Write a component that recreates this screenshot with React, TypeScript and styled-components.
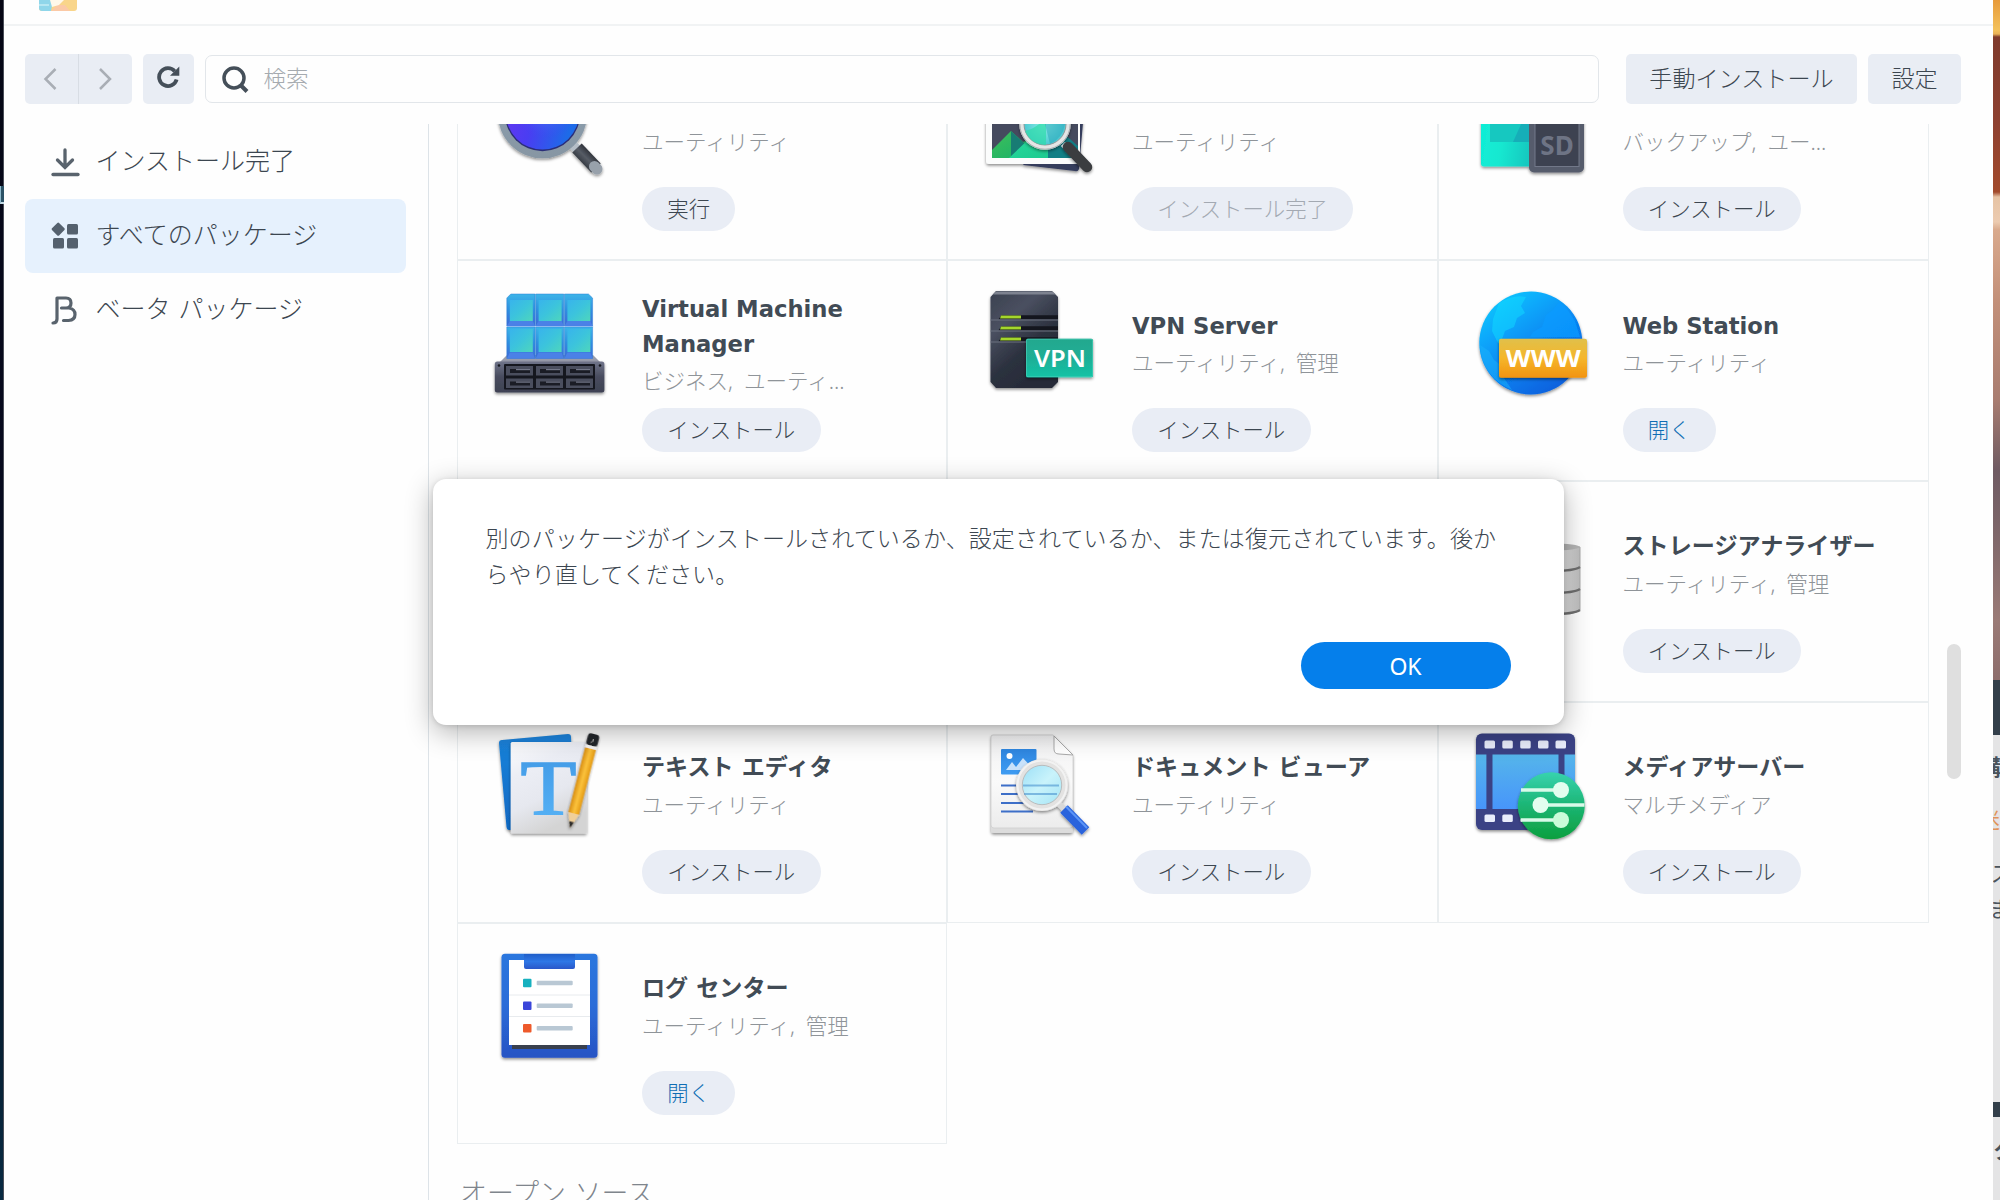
import React from "react";
import styled, { createGlobalStyle } from "styled-components";

const GlobalStyle = createGlobalStyle`
  * { box-sizing: border-box; }
  html, body { margin: 0; padding: 0; }
  body {
    width: 2000px;
    height: 1200px;
    overflow: hidden;
    background: #fefefe;
    font-family: "Noto Sans", "Noto Sans CJK JP", sans-serif;
    font-weight: 300;
    color: #3c4650;
  }
  button { font: inherit; color: inherit; border: 0; padding: 0; margin: 0; }
`;

const Desktop = styled.div`
  position: relative;
  display: flex;
  width: 2000px;
  height: 1200px;
  overflow: hidden;
`;

const LeftEdge = styled.div`
  flex: none;
  width: 4px;
  padding-top: 186px;
  background: linear-gradient(#050614 0, #070a1e 40%, #06233a 66%, #061a2c 80%, #082a42 100%);
  border-right: 1px solid #4a4e58;
`;

const LeftMark = styled.div`
  width: 4px;
  height: 18px;
  border-left: 1px solid #8fb9cc;
  border-bottom: 2px solid #c5dbe6;
  background: #2b5266;
`;

const RightEdge = styled.div`
  flex: none;
  width: 7px;
  display: flex;
  flex-direction: column;
  overflow: hidden;
`;

const Wallpaper = styled.div`
  flex: none;
  height: 680px;
  background: linear-gradient(
    #e79a3a 0, #f3c15b 30px, #e9b257 34px, #7e3a2c 37px, #8d4030 120px, #a24a2c 192px,
    #e6c3a4 197px, #eccbb0 222px, #d9a98c 230px, #c39079 300px, #a87c70 400px,
    #6f5b63 470px, #7a6468 520px, #9a7a76 620px, #8d6d6c 680px
  );
`;

const SideBar = styled.div<{ $h: number }>`
  flex: none;
  height: ${(p) => p.$h}px;
  background: #333f4a;
`;

const SidePanel = styled.div<{ $h: number; $pad?: number }>`
  flex: none;
  height: ${(p) => p.$h}px;
  padding-top: ${(p) => p.$pad ?? 0}px;
  background: #e4e4e5;
  overflow: hidden;
`;

const SideText = styled.div<{ $bold?: boolean; $color?: string; $shift: number; $h?: number }>`
  height: ${(p) => p.$h ?? 36}px;
  line-height: ${(p) => p.$h ?? 36}px;
  font-size: 22px;
  white-space: nowrap;
  font-weight: ${(p) => (p.$bold ? 700 : 400)};
  color: ${(p) => p.$color ?? "#4a535c"};
  text-indent: ${(p) => p.$shift}px;
`;

const Window = styled.main`
  flex: 1;
  min-width: 0;
  display: flex;
  flex-direction: column;
  background: #fefefe;
`;

const TitleBar = styled.header`
  flex: none;
  height: 26px;
  padding-left: 34.5px;
  border-bottom: 2px solid #f1f3f4;
`;

const Toolbar = styled.div`
  flex: none;
  display: flex;
  align-items: flex-start;
  height: 98px;
  padding: 28px 32px 0 20.5px;
`;

const NavGroup = styled.div`
  display: flex;
  width: 107px;
  height: 50px;
  margin-right: 11px;
  border-radius: 5px;
  background: #e9edf4;
  overflow: hidden;
`;

const NavButton = styled.button`
  flex: 1;
  display: flex;
  align-items: center;
  justify-content: center;
  background: transparent;
  & + & { border-left: 1px solid #d8dde4; }
`;

const ToolButton = styled.button<{ $w: number }>`
  flex: none;
  display: flex;
  align-items: center;
  justify-content: center;
  width: ${(p) => p.$w}px;
  height: 50px;
  border-radius: 5px;
  background: #e9edf4;
  font-size: 23.1px;
  padding-bottom: 4px;
  white-space: nowrap;
`;

const SearchBox = styled.div`
  flex: 1;
  display: flex;
  align-items: center;
  gap: 15px;
  height: 48px;
  margin: 1px 27px 0 11px;
  padding-left: 15px;
  border: 1px solid #e2e6ea;
  border-radius: 7px;
  font-size: 22.6px;
  color: #a5aaaf;
`;

const Placeholder = styled.span`
  padding-bottom: 4px;
`;

const ActionGroup = styled.div`
  display: flex;
  gap: 11px;
`;

const Body = styled.div`
  flex: 1;
  min-height: 0;
  display: flex;
`;

const Sidebar = styled.nav`
  flex: none;
  width: 425px;
  padding: 1px 22px 0 21px;
  border-right: 1px solid #dde3e8;
`;

const SideItem = styled.div<{ $active?: boolean }>`
  display: flex;
  align-items: center;
  height: 74px;
  padding: 0 0 6px 25px;
  gap: 15.5px;
  border-radius: 8px;
  background: ${(p) => (p.$active ? "#e6f1fd" : "transparent")};
  font-family: "DejaVu Sans", "Noto Sans CJK JP", sans-serif;
  font-size: 25px;
  white-space: nowrap;
  svg { flex: none; margin-top: 6px; }
`;

const Content = styled.section`
  flex: 1;
  min-width: 0;
  padding-left: 28px;
  overflow: hidden;
`;

const PackageGrid = styled.div`
  display: grid;
  grid-template-columns: 490px 490.5px 491px;
  grid-auto-rows: 221px;
  margin-top: -85px;
`;

const Card = styled.article`
  display: flex;
  gap: 37px;
  padding: 26px 0 0 35px;
  border: 1px solid #eaeef0;
`;

const IconFrame = styled.div`
  flex: none;
  width: 112px;
  height: 112px;
  svg { display: block; overflow: visible; }
`;

const Info = styled.div`
  display: flex;
  flex-direction: column;
  align-items: flex-start;
`;

const Heading = styled.div`
  display: flex;
  flex-direction: column;
  justify-content: center;
  height: 114px;
  margin-bottom: 6.5px;
`;

const Name = styled.h3<{ $latin: boolean }>`
  margin: ${(p) => (p.$latin ? "2px 0 -2px" : "1px 0 -1px")};
  font-family: "DejaVu Sans", "Noto Sans CJK JP", sans-serif;
  font-size: ${(p) => (p.$latin ? 22.7 : 23.1)}px;
  font-weight: 700;
  line-height: 35px;
  min-height: 35px;
  white-space: pre-line;
  color: #414b55;
`;

const Category = styled.div`
  margin-top: 2px;
  font-size: 21.5px;
  line-height: 37px;
  word-spacing: 5.5px;
  white-space: pre;
  color: #8f9499;
`;

const Pill = styled.button<{ $tone: Tone }>`
  height: 44px;
  padding: 0 25.3px 3px;
  border-radius: 22px;
  background: #e9edf5;
  font-size: 21.4px;
  white-space: nowrap;
  color: ${(p) => (p.$tone === "link" ? "#0f6db4" : p.$tone === "muted" ? "#a3a9b2" : "#3c4650")};
`;

const SectionTitle = styled.h2`
  margin: 26.5px 0 0 3px;
  font-family: "DejaVu Sans", "Noto Sans CJK JP", sans-serif;
  font-size: 26.9px;
  font-weight: 300;
  line-height: 46px;
  color: #7f858c;
`;

const ScrollTrack = styled.div`
  flex: none;
  width: 46px;
  padding-top: 520px;
`;

const ScrollThumb = styled.div`
  width: 14px;
  height: 135px;
  border-radius: 7px;
  background: #dfdfdf;
`;

const Dialog = styled.div`
  position: absolute;
  left: 432.5px;
  top: 479px;
  width: 1131px;
  height: 246px;
  padding: 41px 53px 36px;
  display: flex;
  flex-direction: column;
  justify-content: space-between;
  align-items: flex-end;
  border-radius: 13px;
  background: #fff;
  box-shadow: 0 7px 28px rgba(0, 0, 0, 0.3), 0 1px 5px rgba(0, 0, 0, 0.12);
`;

const Message = styled.p`
  align-self: stretch;
  margin: 0;
  font-size: 23px;
  letter-spacing: 0.11px;
  line-height: 36px;
  white-space: pre;
`;

const OkButton = styled.button`
  width: 210px;
  height: 47px;
  border-radius: 24px;
  background: #057feb;
  color: #fff;
  font-size: 23px;
  font-weight: 400;
`;

type Tone = "normal" | "muted" | "link";

interface Pkg {
  icon?: React.ReactNode;
  name?: string;
  category?: string;
  action?: string;
  tone?: Tone;
}

const Icon = ({ children }: { children: React.ReactNode }) => (
  <svg width="112" height="112" viewBox="0 0 112 112">{children}</svg>
);

const Shadow = ({ id }: { id: string }) => (
  <filter id={id} x="-20%" y="-20%" width="140%" height="150%">
    <feDropShadow dx="0" dy="1.6" stdDeviation="1.4" floodColor="#000" floodOpacity="0.45" />
  </filter>
);

const Grad = ({ id, stops, x2 = 0, y2 = 1 }: { id: string; stops: string[]; x2?: number; y2?: number }) => (
  <linearGradient id={id} x1="0" y1="0" x2={x2} y2={y2}>
    {stops.map((c, i) => (
      <stop key={i} offset={i / (stops.length - 1)} stopColor={c} />
    ))}
  </linearGradient>
);

const UniversalSearchIcon = () => (
  <Icon>
    <defs>
      <Shadow id="us-s" />
      <Grad id="us-g" x2={1} y2={0.3} stops={["#6a35f0", "#4a3df2", "#1d6be8"]} />
      <radialGradient id="us-l" cx="0.55" cy="0.35" r="0.5">
        <stop offset="0" stopColor="#58b4ff" stopOpacity="0.9" />
        <stop offset="1" stopColor="#3b46f0" stopOpacity="0" />
      </radialGradient>
      <Grad id="us-r" stops={["#c3ced6", "#8a9cab", "#8796a3"]} />
      <linearGradient id="us-h" gradientUnits="userSpaceOnUse" x1="86" y1="99" x2="98" y2="87">
        <stop offset="0" stopColor="#272b31" />
        <stop offset="0.6" stopColor="#565c66" />
        <stop offset="1" stopColor="#30343b" />
      </linearGradient>
    </defs>
    <g filter="url(#us-s)">
      <path d="M79 78l8 8" stroke="#b5bec7" strokeWidth="9" />
      <path d="M84 82l19 20" stroke="url(#us-h)" strokeWidth="13" />
      <path d="M101.500 100.500l2.500 2.500" stroke="#98a1ab" strokeWidth="11" strokeLinecap="round" />
      <circle cx="49.500" cy="47.600" r="44.700" fill="url(#us-r)" />
    </g>
    <circle cx="49.500" cy="47.600" r="37.600" fill="#2a2d78" />
    <circle cx="49.500" cy="47" r="36.600" fill="url(#us-g)" />
    <circle cx="49.500" cy="47" r="36.600" fill="url(#us-l)" />
  </Icon>
);

const ImageViewerIcon = () => (
  <Icon>
    <defs>
      <Shadow id="iv-s" />
      <Grad id="iv-a" x2={1} stops={["#3fbf5a", "#16b06a"]} />
      <Grad id="iv-b" x2={1} stops={["#2be0a0", "#19c48c"]} />
      <radialGradient id="iv-l">
        <stop offset="0" stopColor="#8ff0e6" />
        <stop offset="1" stopColor="#4cc9d2" />
      </radialGradient>
    </defs>
    <g filter="url(#iv-s)">
      <path d="M98 20l5 2-7 81q-1 3-4 2L40 99z" fill="#343c5c" />
      <rect x="3" y="10" width="94" height="88" rx="3" fill="#fbfcfc" />
    </g>
    <path d="M9 16h86v76H9z" fill="#454a5e" />
    <path d="M9 84l19-19 12 11 14-6v22H9z" fill="url(#iv-a)" />
    <path d="M28 65v27h20l-6-14z" fill="#187c74" />
    <path d="M26 92l40-38 26 38z" fill="url(#iv-b)" />
    <path d="M65 54l30 26v12H65z" fill="#117f86" />
    <g filter="url(#iv-s)">
      <path d="M80 78l5 5" stroke="#c8ccd0" strokeWidth="6" />
      <path d="M85 81l19 20" stroke="#3a3c40" strokeWidth="10.500" strokeLinecap="round" />
      <circle cx="62" cy="58" r="25.700" fill="#e4e5e5" />
    </g>
    <circle cx="62" cy="58" r="25.200" fill="none" stroke="#a9aeb0" strokeWidth="1" />
    <circle cx="62" cy="58" r="21" fill="url(#iv-l)" stroke="#8e9799" strokeWidth="1" />
    <path d="M42 65q10-2 21-13v27q-15 0-21-14z" fill="#2fdcaa" opacity="0.7" />
    <path d="M62 58h20q-2 14-15 20z" fill="#229db5" opacity="0.45" />
  </Icon>
);

const UsbCopyIcon = () => (
  <Icon>
    <defs>
      <Shadow id="uc-s" />
      <Grad id="uc-a" x2={1} y2={0.2} stops={["#0cefd8", "#19e8d0", "#18c9c0"]} />
    </defs>
    <g filter="url(#uc-s)">
      <rect x="7" y="20" width="54" height="80.500" rx="3" fill="url(#uc-a)" />
      <path d="M16 56h39v20H16z" fill="#18c8c0" />
      <path d="M48 56h7v20H39z" fill="#14aeb8" />
      <rect x="55" y="48" width="55" height="58.500" rx="5" fill="#565b6c" />
    </g>
    <rect x="61" y="52" width="44" height="48.500" fill="#3d4251" stroke="#727889" strokeWidth="1" />
    <text x="83" y="89" textAnchor="middle" fontFamily="Noto Sans, sans-serif" fontWeight="700" fontSize="26" fill="#6e7485">SD</text>
  </Icon>
);

const VmmIcon = () => (
  <Icon>
    <defs>
      <Shadow id="vm-s" />
      <Grad id="vm-c" stops={["#3cb4e8", "#2f8fe0", "#3f68d8"]} />
      <Grad id="vm-i" x2={1} stops={["#38b4ec", "#3cc4dc", "#4ed6bc"]} />
      <Grad id="vm-t" stops={["#70748a", "#484c5e", "#3e4253"]} />
    </defs>
    <path d="M14 68h86l9 9H5z" fill="#9a9dac" />
    {[0, 1].map((r) =>
      [0, 1, 2].map((c) => (
        <g key={`${r}${c}`} transform={`translate(${13.8 + c * 28.8} ${7 + r * 33})`}>
          <path
            d={r ? "M0 0h28.200v31.500H0z" : c === 0 ? "M4 0h24.200v32H0V4z" : c === 2 ? "M0 0h24l4.200 4v28H0z" : "M0 0h28.200v32H0z"}
            fill="url(#vm-c)"
            stroke="#2f7fd4"
            strokeWidth="0.500"
          />
          <path d={r ? "M3 2h23v23H3z" : "M3 6h23v21H3z"} fill="url(#vm-i)" />
          <path d={r ? "M0 31.500l3-6h23l2.200 6z" : "M0 32l3-5h23l2.200 5z"} fill="#4f86ea" opacity="0.800" />
          {r === 0 && <path d="M0 32.600h28.800" stroke="#a9ccf8" strokeWidth="1" />}
        </g>
      )),
    )}
    <rect x="1.800" y="74.500" width="109.600" height="31" rx="2.500" fill="url(#vm-t)" filter="url(#vm-s)" />
    <rect x="11" y="77" width="91" height="25.500" rx="1" fill="#15171f" />
    {[0, 1].map((r) =>
      [0, 1, 2].map((c) => (
        <g key={`t${r}${c}`} transform={`translate(${13 + c * 30} ${79 + r * 12.5})`}>
          <rect width="27" height="9.500" fill="#4a4e5e" />
          <rect x="4" y="3" width="20" height="4" fill="#1a1c25" />
          <rect x="10" y="3" width="14" height="1.200" fill="#747889" />
        </g>
      )),
    )}
    <circle cx="6" cy="78.500" r="1.300" fill="#16181f" />
    <circle cx="107" cy="78.500" r="1.300" fill="#16181f" />
  </Icon>
);

const VpnIcon = () => (
  <Icon>
    <defs>
      <Shadow id="vp-s" />
      <Grad id="vp-b" x2={0.6} stops={["#3b4150", "#4a5060", "#2c313f", "#262a37"]} />
      <Grad id="vp-g" stops={["#23a88e", "#1fae96", "#12c3a6"]} />
    </defs>
    <path d="M13 4h56l6 6v85l-6 6H13l-5.500-6V10z" fill="url(#vp-b)" filter="url(#vp-s)" />
    <path d="M13 4.500h56l4 3H10z" fill="#7e8390" />
    {[30, 41, 52].map((y) => (
      <g key={y}>
        <path d={`M7.500 ${y + 2.2}h8l3-4H75v4z`} fill="#14161e" />
        <path d={`M7.500 ${y + 3}H75`} stroke="#6d7280" strokeWidth="1.200" />
        <path d={`M18 ${y - 1.5}h20v3H17z`} fill="#a4d62c" />
      </g>
    ))}
    <rect x="43" y="51.700" width="67" height="38.500" rx="1.500" fill="url(#vp-g)" filter="url(#vp-s)" />
    <rect x="43.500" y="52.200" width="66" height="37.500" rx="1.500" fill="none" stroke="#4bd3bd" strokeWidth="1" opacity="0.600" />
    <text x="77" y="79.500" textAnchor="middle" fontFamily="Noto Sans, sans-serif" fontWeight="600" fontSize="24" textLength="52" lengthAdjust="spacingAndGlyphs" fill="#fff">VPN</text>
  </Icon>
);

const WebIcon = () => (
  <Icon>
    <defs>
      <Shadow id="wb-s" />
      <Grad id="wb-b" x2={0.7} stops={["#16d4fd", "#0aa8fb", "#067ff0", "#0a60dd"]} />
      <Grad id="wb-y" stops={["#e0c04a", "#f5b62c", "#f2930f"]} />
    </defs>
    <circle cx="56.800" cy="56" r="51.500" fill="url(#wb-b)" filter="url(#wb-s)" />
    <path d="M25 16q14-9 27-6l-5 9 4 7-8 5-3 9-9 4-3 8 6 8-10-4-6-12 1-12z" fill="#12dcff" opacity="0.500" />
    <path d="M85 15l8 7 8 12 5 16H56l3-5 9-5 4-12 7-5z" fill="#0b9bff" opacity="0.750" />
    <path d="M6 58l9 6 5 9 8 6 2 12 8 12Q8 90 6 58z" fill="#1bb4fb" opacity="0.500" />
    <rect x="25" y="51.700" width="88" height="39" rx="2" fill="url(#wb-y)" filter="url(#wb-s)" />
    <text x="69.300" y="79.500" textAnchor="middle" fontFamily="Noto Sans, sans-serif" fontWeight="700" fontSize="24" textLength="75" lengthAdjust="spacingAndGlyphs" fill="#fff">WWW</text>
  </Icon>
);

const StorageIcon = () => (
  <Icon>
    <defs>
      <Grad id="st-b" x2={1} y2={0} stops={["#d9d9d9", "#c9c9c9", "#e6e6e6", "#bdbdbd"]} />
    </defs>
    <path d="M50 39v63q6 5 28 5t28-5V39z" fill="url(#st-b)" stroke="#a9a9a9" strokeWidth="1" />
    <ellipse cx="78" cy="39" rx="28" ry="3.500" fill="#b4b4b4" />
    {[59, 81, 102].map((y) => (
      <path key={y} d={`M50 ${y}q6 4 28 4t28-4`} fill="none" stroke="#6f6f6f" strokeWidth="2.500" />
    ))}
  </Icon>
);

const TextEditorIcon = () => (
  <Icon>
    <defs>
      <Shadow id="te-s" />
      <Grad id="te-b" stops={["#1b84dc", "#1068c2"]} />
      <Grad id="te-p" stops={["#fdfdfe", "#eceef5", "#e6e8ef", "#d4d4d4"]} x2={0.4} />
      <Grad id="te-t" stops={["#3f97e4", "#58b4f7"]} />
      <Grad id="te-y" x2={1} y2={0} stops={["#d98f12", "#fbc23c", "#e49a14"]} />
    </defs>
    <path d="M9 11l66-6q3 0 3 3l3 92-65 1q-2 0-2.500-3L6 14q0-3 3-3z" fill="url(#te-b)" filter="url(#te-s)" />
    <rect x="17.700" y="13" width="76" height="91.500" rx="1.500" fill="url(#te-p)" filter="url(#te-s)" />
    <text x="55.500" y="84.500" textAnchor="middle" fontFamily="Liberation Serif, serif" fontSize="79" textLength="56" lengthAdjust="spacingAndGlyphs" fill="url(#te-t)" stroke="url(#te-t)" strokeWidth="1.500">T</text>
    <g transform="translate(77 99) rotate(14.500)" filter="url(#te-s)">
      <path d="M0 0L-5.500-15h11z" fill="#f0cf9a" />
      <path d="M0 0l-2.400-6.500h4.800z" fill="#2c2c2c" />
      <path d="M-5.500-15v-67h11v67z" fill="url(#te-y)" />
      <path d="M-5.500-82v-3h11v3z" fill="#f4f4f4" />
      <rect x="-5.700" y="-97" width="11.400" height="12" rx="3" fill="#24262a" />
      <path d="M-1.500-88q3-1 2-4" stroke="#aaa" fill="none" />
    </g>
  </Icon>
);

const DocViewerIcon = () => (
  <Icon>
    <defs>
      <Shadow id="dv-s" />
      <Grad id="dv-p" stops={["#f1f1f2", "#fafafa", "#ececec"]} />
      <Grad id="dv-l" x2={1} stops={["#9ce0f7", "#c9f3fb", "#a5e4f5"]} />
      <Grad id="dv-i" stops={["#2e86e0", "#3f9cf2"]} />
    </defs>
    <path d="M10 6h60l20 20v75q0 3-3 3H11q-3 0-3-3V8q0-2 2-2z" fill="#dcdcdc" filter="url(#dv-s)" />
    <path d="M10 6h60l20 20v70q0 3-3 3H11q-3 0-3-3V8q0-2 2-2z" fill="url(#dv-p)" stroke="#cfcfcf" strokeWidth="0.800" />
    <path d="M71 7l19 19-14-1q-5 0-5-5z" fill="#fff" stroke="#a9a9a9" strokeWidth="1" />
    <rect x="18" y="20" width="35.500" height="25.500" rx="1" fill="url(#dv-i)" />
    <circle cx="26.500" cy="27" r="3" fill="#fff" />
    <path d="M23 41l6-8 4 5 7-9 11 12z" fill="#c9e2fa" />
    <path d="M18 56.500h34M18 65h32M18 74h32M18 82.500h32" stroke="#3d6fc8" strokeWidth="2" />
    <g filter="url(#dv-s)">
      <path d="M76 75l5 5" stroke="#d8d8d8" strokeWidth="6" />
      <path d="M81 80l21.500 22" stroke="#2a63dc" strokeWidth="10.500" />
      <path d="M83 77.500l21 21.500" stroke="#5b95f7" strokeWidth="2" />
      <circle cx="59" cy="56" r="26" fill="#e3e2e1" />
    </g>
    <circle cx="59" cy="56" r="24.500" fill="none" stroke="#f2f2f2" strokeWidth="2" />
    <circle cx="59" cy="56" r="19.700" fill="url(#dv-l)" stroke="#b9bcbd" strokeWidth="1" />
    <path d="M40 56.500h36M41 65h33" stroke="#4a93cf" strokeWidth="2" opacity="0.600" />
  </Icon>
);

const MediaServerIcon = () => (
  <Icon>
    <defs>
      <Shadow id="ms-s" />
      <Grad id="ms-b" stops={["#55b5ea", "#4795fb"]} />
      <Grad id="ms-g" stops={["#37d3ae", "#1cb574", "#0c9f3e"]} />
    </defs>
    <rect x="2" y="4.500" width="99" height="96.500" rx="6" fill="#3a4285" filter="url(#ms-s)" />
    <path d="M2 25.500h10.400v54.500H2zM18.500 25.500h66v54.500h-66zM90.500 25.500H101v54.500H90.500z" fill="url(#ms-b)" />
    {[10.5, 28.3, 46.2, 64, 81.5].map((x) => (
      <g key={x}>
        <rect x={x} y="11.500" width="10.500" height="8" rx="1.500" fill="#e9edfb" />
        <rect x={x} y="85.500" width="10.500" height="7.500" rx="1.500" fill="#e9edfb" />
      </g>
    ))}
    <circle cx="77.300" cy="76.700" r="33.500" fill="url(#ms-g)" filter="url(#ms-s)" />
    <path d="M47 61h40M67 76h43.500M47 91h40" stroke="#d9fae9" strokeWidth="3.400" />
    <circle cx="87" cy="61" r="8" fill="#e2fdef" />
    <circle cx="66.500" cy="76" r="8" fill="#e2fdef" />
    <circle cx="87" cy="91" r="8" fill="#c9fbd9" />
  </Icon>
);

const LogCenterIcon = () => (
  <Icon>
    <defs>
      <Shadow id="lc-s" />
      <Grad id="lc-b" stops={["#2b76de", "#2a6cd8", "#2753c4"]} />
      <Grad id="lc-c" stops={["#1f5ec9", "#2e77e6", "#2a57c9"]} />
    </defs>
    <rect x="8.500" y="3.700" width="96" height="104" rx="3.500" fill="url(#lc-b)" filter="url(#lc-s)" />
    <path d="M19 95h75v4H19z" fill="#39404e" />
    <path d="M16 10h81v85H16z" fill="#fff" />
    <path d="M16 45h81M16 66.500h81" stroke="#e8ebee" strokeWidth="1" />
    <path d="M31 4h51v13q0 2-2 2H33q-2 0-2-2z" fill="url(#lc-c)" />
    {[
      { y: 33, color: "#17b1bf" },
      { y: 55.8, color: "#3b46da" },
      { y: 78.3, color: "#ee5a2b" },
    ].map(({ y, color }) => (
      <g key={color}>
        <rect x="30" y={y - 4.2} width="8.500" height="8.400" rx="1" fill={color} />
        <rect x="43.700" y={y - 2.2} width="36" height="4.400" rx="1" fill="#b9c8d4" />
      </g>
    ))}
  </Icon>
);

const packages: Pkg[] = [
  { icon: <UniversalSearchIcon />, category: "ユーティリティ", action: "実行" },
  { icon: <ImageViewerIcon />, category: "ユーティリティ", action: "インストール完了", tone: "muted" },
  { icon: <UsbCopyIcon />, category: "バックアップ, ユー...", action: "インストール" },
  { icon: <VmmIcon />, name: "Virtual Machine\nManager", category: "ビジネス, ユーティ...", action: "インストール" },
  { icon: <VpnIcon />, name: "VPN Server", category: "ユーティリティ, 管理", action: "インストール" },
  { icon: <WebIcon />, name: "Web Station", category: "ユーティリティ", action: "開く", tone: "link" },
  {},
  {},
  { icon: <StorageIcon />, name: "ストレージアナライザー", category: "ユーティリティ, 管理", action: "インストール" },
  { icon: <TextEditorIcon />, name: "テキスト エディタ", category: "ユーティリティ", action: "インストール" },
  { icon: <DocViewerIcon />, name: "ドキュメント ビューア", category: "ユーティリティ", action: "インストール" },
  { icon: <MediaServerIcon />, name: "メディアサーバー", category: "マルチメディア", action: "インストール" },
  { icon: <LogCenterIcon />, name: "ログ センター", category: "ユーティリティ, 管理", action: "開く", tone: "link" },
];

const PackageCard = ({ icon, name = "", category, action, tone = "normal" }: Pkg) => (
  <Card>
    {icon && (
      <>
        <IconFrame>{icon}</IconFrame>
        <Info>
          <Heading>
            <Name $latin={/^[A-Z]/.test(name)}>{name}</Name>
            <Category>{category}</Category>
          </Heading>
          <Pill $tone={tone}>{action}</Pill>
        </Info>
      </>
    )}
  </Card>
);

const LogoSvg = styled.svg`
  display: block;
`;

const AppLogo = () => (
  <LogoSvg width="38" height="11" viewBox="0 0 38 11">
    <path d="M0 0h38v8q0 3-3 3H3q-3 0-3-3z" fill="#f9d58a" />
    <path d="M0 0h14l-2 11H3q-3 0-3-3z" fill="#8fd6ea" />
    <path d="M0 4h10v2H0z" fill="#b7e7f2" />
    <path d="M12 11l6-6h8l5 6z" fill="#fbc9a6" />
    <path d="M11 0h14l-5 5-7 2z" fill="#fff8ea" />
  </LogoSvg>
);

const Chevron = ({ d }: { d: string }) => (
  <svg width="16" height="24" viewBox="0 0 16 24" fill="none" stroke="#a9aeb5" strokeWidth="2.500">
    <path d={d} />
  </svg>
);

export default function App() {
  return (
    <>
      <GlobalStyle />
      <Desktop>
        <LeftEdge>
          <LeftMark />
        </LeftEdge>
        <Window>
          <TitleBar>
            <AppLogo />
          </TitleBar>
          <Toolbar>
            <NavGroup>
              <NavButton><Chevron d="M12.500 2L2.500 12l10 10" /></NavButton>
              <NavButton><Chevron d="M3 2l10 10L3 22" /></NavButton>
            </NavGroup>
            <ToolButton $w={51}>
              <svg width="24" height="24" viewBox="0 0 24 24" fill="none">
                <path d="M18.700 6.200A8.900 8.900 0 1 0 20.600 14.500" stroke="#454f59" strokeWidth="3.800" />
                <path d="M23.300 1.500v9.300H14z" fill="#454f59" />
              </svg>
            </ToolButton>
            <SearchBox>
              <svg width="28" height="28" viewBox="0 0 28 28" fill="none" stroke="#454f59">
                <circle cx="13" cy="13" r="10" strokeWidth="3.500" />
                <path d="M20 20.500l6 6" strokeWidth="4" />
              </svg>
              <Placeholder>検索</Placeholder>
            </SearchBox>
            <ActionGroup>
              <ToolButton $w={231}>手動インストール</ToolButton>
              <ToolButton $w={93}>設定</ToolButton>
            </ActionGroup>
          </Toolbar>
          <Body>
            <Sidebar>
              <SideItem>
                <svg width="30" height="30" viewBox="0 0 30 30" fill="none" stroke="#59636d" strokeWidth="3.300" strokeLinecap="round">
                  <path d="M15 3v17M7.500 13l7.500 7.500L22.500 13" />
                  <path d="M3 27.500h25" />
                </svg>
                インストール完了
              </SideItem>
              <SideItem $active>
                <svg width="30" height="30" viewBox="0 0 30 30" fill="#55616e">
                  <rect x="3.200" y="3.200" width="10" height="10" rx="1.200" transform="rotate(45 8.200 8.200)" />
                  <rect x="17" y="3" width="11" height="10.500" rx="1.500" />
                  <rect x="3" y="17" width="11" height="10.500" rx="1.500" />
                  <rect x="17" y="17" width="11" height="10.500" rx="1.500" />
                </svg>
                すべてのパッケージ
              </SideItem>
              <SideItem>
                <svg width="30" height="30" viewBox="0 0 30 30" fill="none" stroke="#59636d" strokeWidth="3.200" strokeLinecap="round" strokeLinejoin="round">
                  <path d="M3 28q4 0 4-4V3h9q5 0 5 5t-5 5h-4.500M16 13h3q6 1 6 6.500T18.500 25.500h-5" />
                </svg>
                ベータ パッケージ
              </SideItem>
            </Sidebar>
            <Content>
              <PackageGrid>
                {packages.map((p, i) => (
                  <PackageCard key={i} {...p} />
                ))}
              </PackageGrid>
              <SectionTitle>オープン ソース</SectionTitle>
            </Content>
            <ScrollTrack>
              <ScrollThumb />
            </ScrollTrack>
          </Body>
        </Window>
        <RightEdge>
          <Wallpaper />
          <SideBar $h={55} />
          <SidePanel $h={367} $pad={13}>
            <SideText $bold $shift={-14}>購</SideText>
            <SideText $color="#e0935a" $shift={-15} $h={70}>迷</SideText>
            <SideText $shift={-2}>ズ</SideText>
            <SideText $shift={-4}>ま</SideText>
          </SidePanel>
          <SideBar $h={15} />
          <SidePanel $h={83} $pad={14}>
            <SideText $bold $shift={0}>ク</SideText>
          </SidePanel>
        </RightEdge>
        <Dialog>
          <Message>
            {"別のパッケージがインストールされているか、設定されているか、または復元されています。後か\nらやり直してください。"}
          </Message>
          <OkButton>OK</OkButton>
        </Dialog>
      </Desktop>
    </>
  );
}
